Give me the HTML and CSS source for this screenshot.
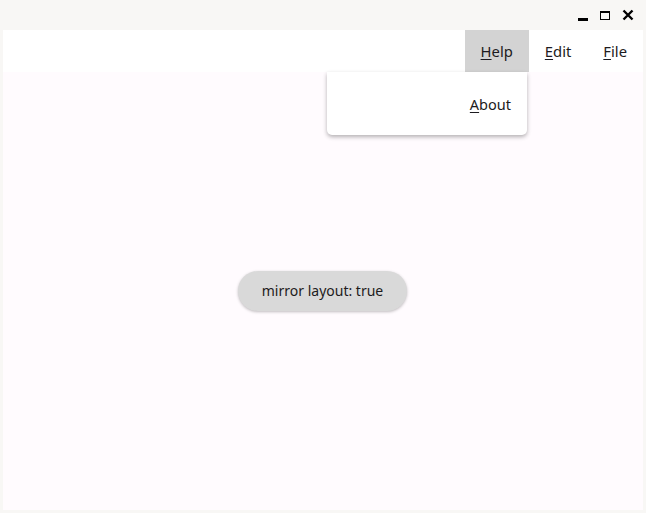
FILE: index.html
```html
<!DOCTYPE html>
<html lang="en">
<head>
  <meta charset="UTF-8">
  <title>mirror layout</title>
  <link rel="stylesheet" href="styles.css">
</head>
<body>
  <div class="window">
    <div class="titlebar">
      <span class="ctl min"></span>
      <span class="ctl max"></span>
      <svg class="ctl close" width="12" height="12" viewBox="0 0 12 12">
        <path d="M1.5 1.5 L10.5 10.5 M10.5 1.5 L1.5 10.5" stroke="#000" stroke-width="2.4"/>
      </svg>
    </div>
    <div class="client">
      <div class="menubar">
        <div class="menu-item active"><u>H</u>elp</div>
        <div class="menu-item"><u>E</u>dit</div>
        <div class="menu-item"><u>F</u>ile</div>
      </div>
      <div class="content">
        <div class="dropdown">
          <div class="dropdown-item"><u>A</u>bout</div>
        </div>
        <button class="pill">mirror layout: true</button>
      </div>
    </div>
  </div>
</body>
</html>
```

FILE: styles.css
```css
html, body {
  margin: 0;
  padding: 0;
}
body {
  width: 646px;
  height: 513px;
  background-color: #f8f7f5;
  font-family: 'Noto Sans', sans-serif;
  color: #1d1b20;
  overflow: hidden;
}
.window {
  display: flex;
  flex-direction: column;
  height: 513px;
}
.titlebar {
  height: 30px;
  display: flex;
  justify-content: flex-end;
  align-items: center;
  gap: 12px;
  padding-right: 12px;
  box-sizing: border-box;
}
.ctl {
  display: block;
}
.min {
  width: 10px;
  height: 3px;
  background: #000;
  margin-top: 8px;
}
.max {
  width: 8px;
  height: 6px;
  border: 1px solid #000;
  border-top-width: 2px;
}
.client {
  flex: 1;
  margin: 0 3px 3px 3px;
  display: flex;
  flex-direction: column;
  background-color: #fffbfe;
}
.menubar {
  height: 42px;
  background-color: #fff;
  display: flex;
  justify-content: flex-end;
}
.menu-item {
  padding: 0 16px;
  font-size: 14.8px;
  line-height: 42px;
}
.menu-item.active {
  background-color: #d3d3d3;
}
u {
  text-decoration-thickness: 1px;
  text-underline-offset: 2px;
}
.content {
  flex: 1;
  position: relative;
  display: flex;
  justify-content: center;
  align-items: center;
}
.dropdown {
  position: absolute;
  top: 0;
  left: 324px;
  width: 200px;
  height: 63px;
  background: #fff;
  border-radius: 0 0 5px 5px;
  box-shadow: 0 2px 4px rgba(0, 0, 0, 0.3);
  display: flex;
  align-items: center;
  justify-content: flex-end;
}
.dropdown-item {
  padding: 0 16px;
  font-size: 14.5px;
}
.pill {
  width: 169px;
  height: 40px;
  border: none;
  border-radius: 20px;
  background-color: #d9d9d9;
  color: #1d1b20;
  font-family: 'Noto Sans', sans-serif;
  font-size: 14px;
  box-shadow: 0 1px 3px rgba(0, 0, 0, 0.25);
  margin-top: -1px;
  margin-left: -1px;
}
```
